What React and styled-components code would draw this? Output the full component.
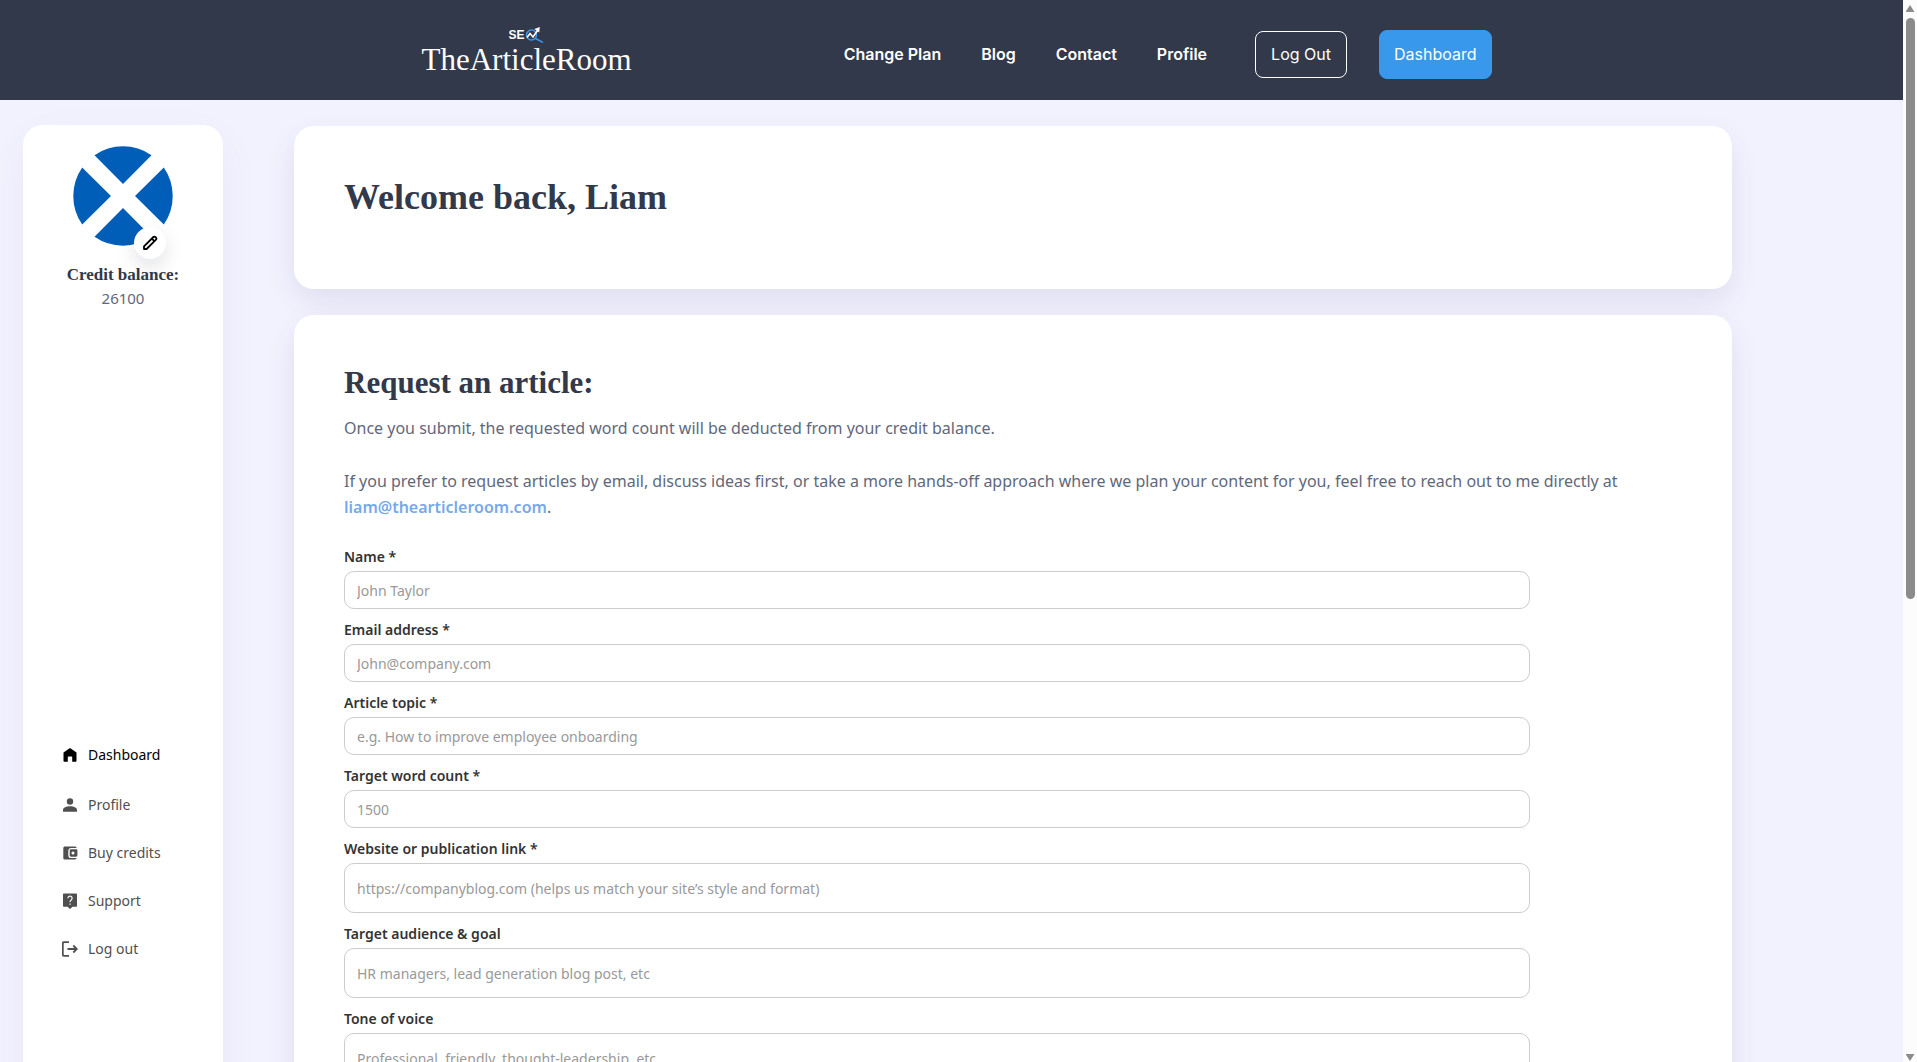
import styled, { createGlobalStyle } from "styled-components";

const menuItems = [
  { label: "Dashboard", icon: HomeIcon, active: true },
  { label: "Profile", icon: PersonIcon },
  { label: "Buy credits", icon: WalletIcon },
  { label: "Support", icon: SupportIcon },
  { label: "Log out", icon: LogoutIcon },
];

const fields = [
  { id: "name", label: "Name *", placeholder: "John Taylor" },
  {
    id: "email",
    label: "Email address *",
    placeholder: "John@company.com",
    type: "email",
  },
  {
    id: "topic",
    label: "Article topic *",
    placeholder: "e.g. How to improve employee onboarding",
  },
  { id: "words", label: "Target word count *", placeholder: "1500" },
  {
    id: "website",
    label: "Website or publication link *",
    placeholder:
      "https://companyblog.com (helps us match your site’s style and format)",
    tall: true,
  },
  {
    id: "audience",
    label: "Target audience & goal",
    placeholder: "HR managers, lead generation blog post, etc",
    tall: true,
  },
  {
    id: "tone",
    label: "Tone of voice",
    placeholder: "Professional, friendly, thought-leadership, etc",
    tall: true,
  },
];

function HomeIcon() {
  return (
    <svg viewBox="0 0 16 16" fill="currentColor">
      <path d="M8 1 1.500 5.600v8.200c0 .6.400 1 1 1h3.300V10.200c0-.4.300-.7.700-.7h3c.4 0 .7.300.7.7v4.600h3.300c.6 0 1-.4 1-1V5.600z" />
    </svg>
  );
}

function PersonIcon() {
  return (
    <svg viewBox="0 0 16 16" fill="currentColor">
      <circle cx="8" cy="4.500" r="3.200" />
      <path d="M1 14.800v-1.800C1 10.300 4.500 9.200 8 9.200s7 1.100 7 3.800v1.800z" />
    </svg>
  );
}

function WalletIcon() {
  return (
    <svg viewBox="0 0 16 16" fill="currentColor">
      <path d="M3 1.500h10c.8 0 1.500.6 1.500 1.400H9c-1.500 0-2.700 1.200-2.700 2.700v4.800c0 1.500 1.200 2.700 2.700 2.700h5.500c0 .8-.7 1.400-1.500 1.400H3c-1 0-1.700-.7-1.700-1.600V3.100c0-.9.700-1.600 1.700-1.600z" />
      <path
        fillRule="evenodd"
        d="M9 4.200h5.200c.7 0 1.200.5 1.200 1.200v5.200c0 .7-.5 1.200-1.200 1.200H9c-.7 0-1.300-.5-1.300-1.200V5.400c0-.7.6-1.200 1.300-1.200zm2 2.300a1.500 1.500 0 1 0 0 3 1.500 1.500 0 0 0 0-3z"
      />
    </svg>
  );
}

function SupportIcon() {
  return (
    <svg viewBox="0 0 16 16">
      <path
        d="M2 .5h12c.6 0 1 .4 1 1v11.300c0 .6-.4 1-1 1h-3.500L8 16l-2.500-2.200H2c-.6 0-1-.4-1-1V1.500c0-.6.4-1 1-1z"
        fill="currentColor"
      />
      <path
        d="M5.900 5.200a2.100 2.100 0 1 1 3.500 1.600C8.500 7.600 8 8 8 9M8 10.500v1.300"
        fill="none"
        stroke="#fff"
        strokeWidth="1.200"
      />
    </svg>
  );
}

function LogoutIcon() {
  return (
    <svg
      viewBox="0 0 16 16"
      fill="none"
      stroke="currentColor"
      strokeWidth="1.800"
    >
      <path d="M7 1.200H2c-.7 0-1.200.5-1.200 1.200v11.200c0 .7.500 1.200 1.200 1.200h5" />
      <path d="M5.500 8H15M11.300 4.500 14.800 8l-3.500 3.500" />
    </svg>
  );
}

function PencilIcon() {
  return (
    <svg
      viewBox="0 0 16 16"
      width="16"
      height="16"
      fill="none"
      stroke="currentColor"
      strokeWidth="1.800"
      strokeLinejoin="round"
    >
      <path d="M2 14v-2.600L11.400 2c.6-.6 1.300-.6 1.900 0l.7.7c.6.6.6 1.300 0 1.900L4.600 14z" />
      <path d="m9.800 3.600 2.600 2.600" />
    </svg>
  );
}

function Magnifier() {
  return (
    <svg viewBox="0 0 20 16" width="20" height="16" fill="none">
      <circle cx="6.500" cy="8" r="5" stroke="#3898ec" strokeWidth="1.500" />
      <path d="m10.500 11.500 7.500 4" stroke="#3898ec" strokeWidth="1.500" />
      <path d="m2 10.500 3-4 3 3.500 4.500-6.500" stroke="#fff" strokeWidth="1.600" />
      <path d="m9.300 2 5.500-2-.6 5.600z" fill="#fff" />
    </svg>
  );
}

function Saltire() {
  return (
    <svg viewBox="0 0 100 100" width="100" height="100">
      <path
        d="M21.500 9.200A50 50 0 0 1 78.500 9.200L50 38zM21.500 90.800A50 50 0 0 0 78.500 90.800L50 62zM9.200 21.500A50 50 0 0 0 9.200 78.500L38 50zM90.800 21.500A50 50 0 0 1 90.800 78.500L62 50z"
        fill="#005eb8"
      />
    </svg>
  );
}

function App() {
  return (
    <Page>
      <GlobalStyle />
      <Content>
        <Header>
          <HeaderInner>
            <Logo href="#">
              <LogoTag>
                SE
                <Magnifier />
              </LogoTag>
              <LogoName>TheArticleRoom</LogoName>
            </Logo>
            <Nav>
              <NavLink href="#">Change Plan</NavLink>
              <NavLink href="#">Blog</NavLink>
              <NavLink href="#">Contact</NavLink>
              <NavLink href="#">Profile</NavLink>
              <HeaderButtons>
                <OutlineButton type="button">Log Out</OutlineButton>
                <SolidButton type="button">Dashboard</SolidButton>
              </HeaderButtons>
            </Nav>
          </HeaderInner>
        </Header>
        <Body>
          <Sidebar>
            <Avatar>
              <Saltire />
              <EditButton type="button" aria-label="Edit picture">
                <PencilIcon />
              </EditButton>
            </Avatar>
            <BalanceLabel>Credit balance:</BalanceLabel>
            <Balance>26100</Balance>
            <Menu>
              {menuItems.map(({ label, icon: Icon, active }) => (
                <MenuLink key={label} href="#" $active={active}>
                  <Icon />
                  {label}
                </MenuLink>
              ))}
            </Menu>
          </Sidebar>
          <Main>
            <Card>
              <Title>Welcome back, Liam</Title>
            </Card>
            <Card>
              <Subtitle>Request an article:</Subtitle>
              <Text>
                Once you submit, the requested word count will be deducted from
                your credit balance.
              </Text>
              <Text>
                If you prefer to request articles by email, discuss ideas first,
                or take a more hands-off approach where we plan your content for
                you, feel free to reach out to me directly at{" "}
                <a href="mailto:liam@thearticleroom.com">
                  liam@thearticleroom.com
                </a>
                .
              </Text>
              <Form>
                {fields.map(({ id, label, placeholder, type, tall }) => (
                  <Field key={id}>
                    <Label htmlFor={id}>{label}</Label>
                    <Input
                      id={id}
                      type={type || "text"}
                      placeholder={placeholder}
                      $tall={tall}
                    />
                  </Field>
                ))}
              </Form>
            </Card>
          </Main>
        </Body>
      </Content>
      <Scrollbar aria-hidden="true">
        <Arrow />
        <Thumb />
        <Arrow $down />
      </Scrollbar>
    </Page>
  );
}
export default App;

const GlobalStyle = createGlobalStyle`
  * {
    box-sizing: border-box;
  }
  body {
    margin: 0;
    background-color: #f2f2ff;
    color: #5f687b;
    font-family: "Noto Sans", "Open Sans", sans-serif;
    font-size: 16px;
    line-height: 26px;
  }
`;

const Page = styled.div`
  display: flex;
  height: 100vh;
  overflow: hidden;
`;

const Content = styled.div`
  display: flex;
  flex-direction: column;
  flex: 1;
  min-width: 0;
  overflow: hidden;
`;

const Header = styled.header`
  flex: none;
  background-color: #31394a;
`;

const HeaderInner = styled.div`
  display: flex;
  align-items: center;
  justify-content: space-between;
  max-width: 1080px;
  height: 100px;
  margin: 0 auto;
  padding: 8px 0 0 10px;
`;

const Logo = styled.a`
  display: flex;
  flex-direction: column;
  align-items: center;
  padding-bottom: 4px;
  color: #fff;
  text-decoration: none;
`;

const LogoTag = styled.span`
  display: flex;
  align-items: center;
  height: 16px;
  font: 700 12px/16px "Liberation Sans", sans-serif;
`;

const LogoName = styled.span`
  font: 31px/34px "Liberation Serif", serif;
`;

const Nav = styled.nav`
  display: flex;
  align-items: center;
  gap: 40px;
`;

const NavLink = styled.a`
  color: #fff;
  font: 600 16px/24px Inter, sans-serif;
  text-decoration: none;
`;

const HeaderButtons = styled.div`
  display: flex;
  align-items: center;
  gap: 32px;
  padding-left: 8px;
`;

const OutlineButton = styled.button`
  height: 47px;
  padding: 0 15px;
  border: 1px solid #fff;
  border-radius: 8px;
  background: transparent;
  color: #fff;
  font: 400 16px/24px Inter, sans-serif;
  cursor: pointer;
`;

const SolidButton = styled(OutlineButton)`
  height: 49px;
  padding: 0 14px;
  border-color: #3898ec;
  background: #3898ec;
`;

const Body = styled.div`
  display: flex;
  align-items: flex-start;
  gap: 71px;
  flex: 1;
  padding: 25px 9% 0 23px;
`;

const Sidebar = styled.aside`
  display: flex;
  flex-direction: column;
  align-items: center;
  flex: none;
  width: 200px;
  height: 100vh;
  padding-top: 21px;
  border-radius: 20px;
  background-color: #fff;
  box-shadow: 0 14px 40px rgba(20, 20, 100, 0.05);
`;

const Avatar = styled.div`
  position: relative;
  height: 100px;
`;

const EditButton = styled.button`
  position: absolute;
  right: 7px;
  bottom: -13px;
  display: flex;
  align-items: center;
  justify-content: center;
  width: 32px;
  height: 32px;
  padding: 0;
  border: 0;
  border-radius: 50%;
  background: #fff;
  color: #000;
  box-shadow: 0 8px 20px rgba(8, 15, 52, 0.12);
  cursor: pointer;
`;

const BalanceLabel = styled.h4`
  margin: 17px 0 0;
  color: #31394a;
  font: 700 17px/24px "Liberation Serif", serif;
`;

const Balance = styled.p`
  margin: 0;
  font-size: 15px;
  line-height: 22px;
`;

const Menu = styled.nav`
  display: flex;
  flex-direction: column;
  align-self: stretch;
  margin-top: 420px;
  padding-left: 39px;
`;

const MenuLink = styled.a`
  display: flex;
  align-items: center;
  gap: 10px;
  height: ${(props) => (props.$active ? 52 : 48)}px;
  color: ${(props) => (props.$active ? "#000" : "#505050")};
  font-size: 14px;
  text-decoration: none;
  svg {
    width: 16px;
    height: 16px;
  }
`;

const Main = styled.main`
  display: flex;
  flex-direction: column;
  gap: 26px;
  flex: 1;
  min-width: 0;
  padding-top: 1px;
`;

const Card = styled.section`
  padding: 50px;
  border-radius: 20px;
  background-color: #fff;
  box-shadow: 0 12px 30px rgba(20, 20, 80, 0.09);
`;

const Title = styled.h1`
  margin: 0 0 21px;
  color: #31394a;
  font: 700 36px/42px "Liberation Serif", serif;
`;

const Subtitle = styled.h2`
  margin: 0 0 14px;
  color: #31394a;
  font: 700 31px/36px "Liberation Serif", serif;
`;

const Text = styled.p`
  margin: 0 0 27px;
  a {
    color: #76a9ea;
    font-weight: 600;
    text-decoration: none;
  }
`;

const Form = styled.form`
  padding-right: 152px;
`;

const Field = styled.div`
  margin-bottom: 11px;
`;

const Label = styled.label`
  display: block;
  margin-bottom: 4px;
  color: #333;
  font-size: 14px;
  font-weight: 600;
  line-height: 20px;
`;

const Input = styled.input`
  display: block;
  width: 100%;
  height: ${(props) => (props.$tall ? 50 : 38)}px;
  padding: 0 12px;
  border: 1px solid #ccc;
  border-radius: 10px;
  background: #fff;
  font: 14px/20px "Noto Sans", sans-serif;
  &::placeholder {
    color: #999;
    opacity: 1;
  }
`;

const Scrollbar = styled.div`
  display: flex;
  flex-direction: column;
  align-items: center;
  flex: none;
  width: 14px;
  padding: 5px 0 1px;
  background-color: #fcfcfc;
`;

const Arrow = styled.span`
  width: 9px;
  height: 7px;
  margin-top: ${(props) => (props.$down ? "auto" : 0)};
  background-color: #8b8b8b;
  clip-path: ${(props) =>
    props.$down
      ? "polygon(0 0, 100% 0, 50% 100%)"
      : "polygon(50% 0, 100% 100%, 0 100%)"};
`;

const Thumb = styled.span`
  width: 9px;
  height: 55%;
  margin-top: 6px;
  border-radius: 5px;
  background-color: #8b8b8b;
`;
